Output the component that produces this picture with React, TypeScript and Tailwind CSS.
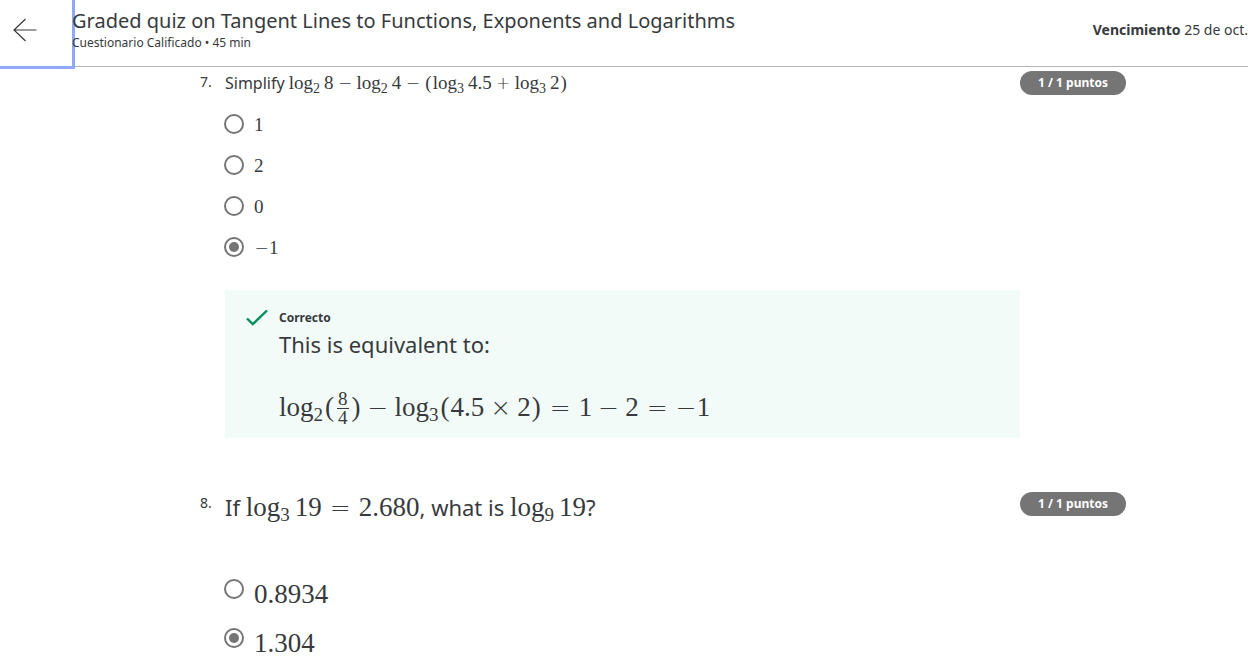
import type { ReactNode } from 'react';

type Size = 'sm' | 'lg';

function Formula({ size, children }: { size: Size; children: ReactNode }) {
  return (
    <span
      className={`inline-flex items-baseline whitespace-nowrap font-['Liberation_Serif',serif] ${
        size === 'sm' ? 'text-[19px] leading-[22px]' : 'text-[27px] leading-[30px]'
      }`}
    >
      {children}
    </span>
  );
}

const opStyles = {
  sm: {
    base: 'w-[15px] text-[17px]',
    binary: 'mx-1',
    relation: 'mx-[5px]',
    unary: '',
  },
  lg: {
    base: 'w-[21px] text-[25px]',
    binary: 'mx-[6px]',
    relation: 'mx-[8px]',
    unary: '',
  },
};

function Op({
  size,
  kind = 'binary',
  children,
}: {
  size: Size;
  kind?: 'binary' | 'relation' | 'unary';
  children: string;
}) {
  return (
    <span
      className={`flex justify-center font-['DejaVu_Sans',sans-serif] leading-none font-extralight ${opStyles[size].base} ${opStyles[size][kind]}`}
    >
      {children}
    </span>
  );
}

function Paren({ children }: { children: string }) {
  return <span className="px-px">{children}</span>;
}

function Log({ size, base, tight = false }: { size: Size; base: string; tight?: boolean }) {
  return (
    <span className={tight ? 'mr-px' : size === 'sm' ? 'mr-1' : 'mr-[5px]'}>
      log
      <sub
        className={`relative leading-none align-baseline ${
          size === 'sm' ? 'top-1 bottom-auto text-[14px]' : 'top-[5px] bottom-auto text-[19px]'
        }`}
      >
        {base}
      </sub>
    </span>
  );
}

function Fraction({ top, bottom }: { top: string; bottom: string }) {
  return (
    <span className="mx-[2px] inline-flex flex-col self-center pt-[3px] text-center text-[19px]">
      <span className="border-b border-current px-px leading-[18px]">{top}</span>
      <span className="leading-[18px]">{bottom}</span>
    </span>
  );
}

function Points() {
  return (
    <span className="flex h-6 items-center justify-center rounded-full bg-[#757575] text-[12px] font-bold text-white">
      1 / 1 puntos
    </span>
  );
}

function Option({
  name,
  size,
  checked = false,
  children,
}: {
  name: string;
  size: Size;
  checked?: boolean;
  children: ReactNode;
}) {
  return (
    <label className={`flex gap-[10px] ${size === 'sm' ? 'h-[41px]' : 'h-[49px]'}`}>
      <input
        type="radio"
        name={name}
        defaultChecked={checked}
        className="m-0 size-5 shrink-0 appearance-none rounded-full border-2 border-[#757575] bg-clip-content p-[3px] checked:bg-[#757575]"
      />
      <Formula size={size}>{children}</Formula>
    </label>
  );
}

export default function App() {
  return (
    <div className="font-['Noto_Sans',sans-serif] text-[#373a3c]">
      <header className="flex h-[67px] items-stretch border-b border-[#b5b5b5]">
        <button
          type="button"
          aria-label="Atrás"
          className="flex w-[72px] shrink-0 items-center pl-3 outline-3 outline-[#91a8fa]"
        >
          <svg viewBox="0 0 26 26" className="-mt-[6px] size-[26px]" fill="none" stroke="#373a3c" strokeWidth="1.2">
            <path d="M24.5 13H2M13.5 2 2 13l11.5 11" />
          </svg>
        </button>
        <div className="relative flex grow flex-col pt-2">
          <h1 className="text-[20px] leading-[26px]">
            Graded quiz on Tangent Lines to Functions, Exponents and Logarithms
          </h1>
          <p className="text-[12px] leading-[18px]">Cuestionario Calificado • 45 min</p>
        </div>
        <p className="shrink-0 pt-5 text-[14px] leading-5">
          <strong className="font-bold">Vencimiento</strong> 25 de oct.
        </p>
      </header>

      <main className="pr-[122px] pl-[200px]">
        <section className="grid grid-cols-[25px_1fr_106px] pt-1">
          <span className="text-[14px] leading-[22px]">7.</span>
          <div>
            <p className="flex items-baseline text-[16px] leading-6">
              Simplify&nbsp;
              <Formula size="sm">
                <Log size="sm" base="2" />8<Op size="sm">−</Op>
                <Log size="sm" base="2" />4<Op size="sm">−</Op>
                <Paren>(</Paren>
                <Log size="sm" base="3" />
                4.5<Op size="sm">+</Op>
                <Log size="sm" base="3" />2<Paren>)</Paren>
              </Formula>
            </p>
            <div className="mt-[19px] -ml-px flex flex-col">
              <Option name="q7" size="sm">1</Option>
              <Option name="q7" size="sm">2</Option>
              <Option name="q7" size="sm">0</Option>
              <Option name="q7" size="sm" checked>
                <Op size="sm" kind="unary">−</Op>1
              </Option>
            </div>
            <div className="mt-3 flex bg-[#f2fbf8] pt-[18px] pb-4 pl-5">
              <svg viewBox="0 0 24 20" className="h-5 w-6 shrink-0" fill="none" stroke="#008f5b" strokeWidth="2.4">
                <path d="M2 10.5 7.8 16.2 22 2.5" />
              </svg>
              <div className="pl-[10px]">
                <p className="text-[12px] leading-5 font-bold">Correcto</p>
                <p className="text-[22px] leading-8">This is equivalent to:</p>
                <p className="mt-8 flex h-[30px]">
                  <Formula size="lg">
                    <Log size="lg" base="2" tight />
                    <Paren>(</Paren>
                    <Fraction top="8" bottom="4" />
                    <Paren>)</Paren>
                    <Op size="lg">−</Op>
                    <Log size="lg" base="3" tight />
                    <Paren>(</Paren>
                    4.5<Op size="lg">×</Op>2<Paren>)</Paren>
                    <Op size="lg" kind="relation">=</Op>1<Op size="lg">−</Op>2
                    <Op size="lg" kind="relation">=</Op>
                    <Op size="lg" kind="unary">−</Op>1
                  </Formula>
                </p>
              </div>
            </div>
          </div>
          <Points />
        </section>

        <section className="mt-[54px] grid grid-cols-[25px_1fr_106px]">
          <span className="text-[14px] leading-[22px]">8.</span>
          <div>
            <p className="flex h-8 items-baseline text-[22px] leading-[30px]">
              If&nbsp;
              <Formula size="lg">
                <Log size="lg" base="3" />
                19<Op size="lg" kind="relation">=</Op>2.680
              </Formula>
              , what is&nbsp;
              <Formula size="lg">
                <Log size="lg" base="9" />
                19
              </Formula>
              ?
            </p>
            <div className="mt-[55px] -ml-px flex flex-col">
              <Option name="q8" size="lg">0.8934</Option>
              <Option name="q8" size="lg" checked>1.304</Option>
            </div>
          </div>
          <Points />
        </section>
      </main>
    </div>
  );
}
